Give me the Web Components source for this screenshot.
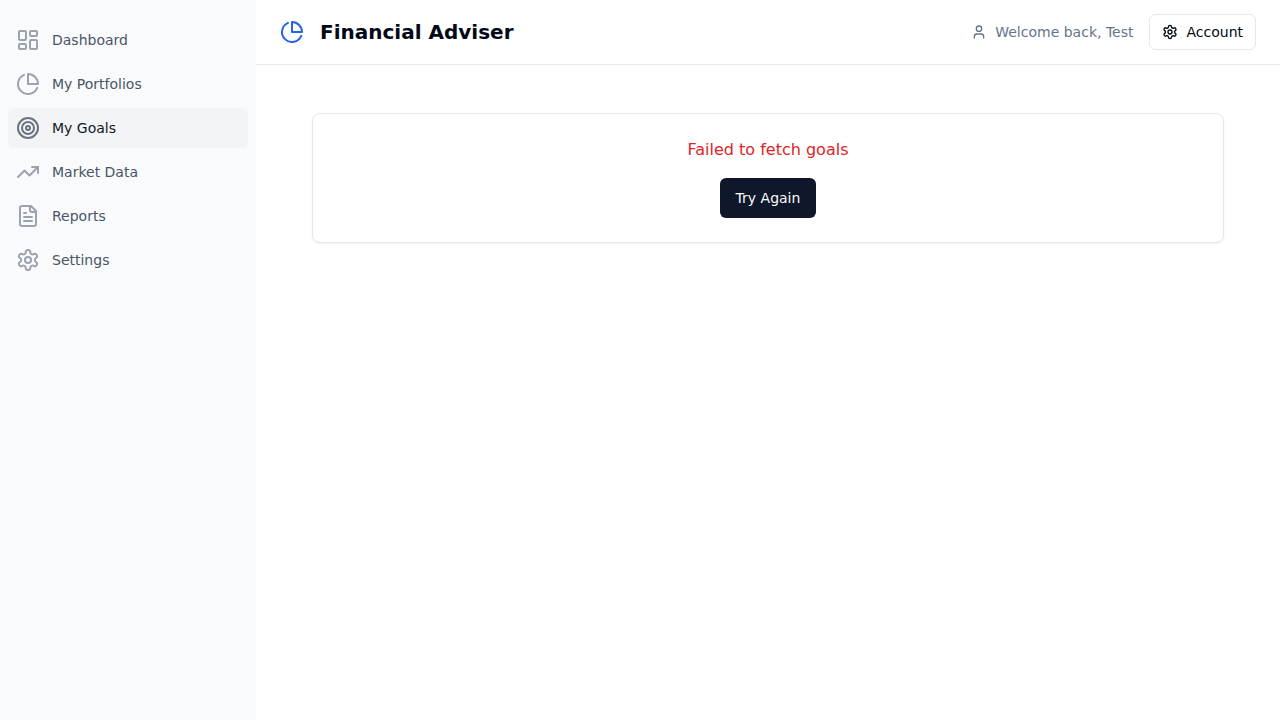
<!DOCTYPE html>
<html lang="en">
<head>
<meta charset="utf-8">
<meta name="viewport" content="width=device-width, initial-scale=1">
<title>Financial Adviser</title>
<style>
  body {
    margin: 0;
    font-family: "DejaVu Sans", sans-serif;
    font-size: 14px;
    line-height: 20px;
    color: #020817;
    background: #ffffff;
  }
</style>
</head>
<body>
<app-shell>
  <side-nav slot="sidebar">
    <nav-item icon="dashboard" href="#dashboard">Dashboard</nav-item>
    <nav-item icon="pie" href="#portfolios">My Portfolios</nav-item>
    <nav-item icon="target" href="#goals" active>My Goals</nav-item>
    <nav-item icon="trend" href="#market">Market Data</nav-item>
    <nav-item icon="file" href="#reports">Reports</nav-item>
    <nav-item icon="settings" href="#settings">Settings</nav-item>
  </side-nav>
  <app-header slot="header">
    Financial Adviser
    <user-greeting slot="actions">Welcome back, Test</user-greeting>
    <ui-button slot="actions" variant="outline" icon="settings">Account</ui-button>
  </app-header>
  <error-card>
    Failed to fetch goals
    <ui-button slot="action">Try Again</ui-button>
  </error-card>
</app-shell>

<script>
  const ICONS = {
    dashboard: '<rect width="7" height="9" x="3" y="3" rx="1"/><rect width="7" height="5" x="14" y="3" rx="1"/><rect width="7" height="9" x="14" y="12" rx="1"/><rect width="7" height="5" x="3" y="16" rx="1"/>',
    pie: '<path d="M21.21 15.89A10 10 0 1 1 8 2.83"/><path d="M22 12A10 10 0 0 0 12 2v10z"/>',
    target: '<circle cx="12" cy="12" r="10"/><circle cx="12" cy="12" r="6"/><circle cx="12" cy="12" r="2"/>',
    trend: '<polyline points="22 7 13.5 15.5 8.5 10.5 2 17"/><polyline points="16 7 22 7 22 13"/>',
    file: '<path d="M15 2H6a2 2 0 0 0-2 2v16a2 2 0 0 0 2 2h12a2 2 0 0 0 2-2V7Z"/><path d="M14 2v4a2 2 0 0 0 2 2h4"/><path d="M10 9H8"/><path d="M16 13H8"/><path d="M16 17H8"/>',
    settings: '<path d="M12.22 2h-.44a2 2 0 0 0-2 2v.18a2 2 0 0 1-1 1.73l-.43.25a2 2 0 0 1-2 0l-.15-.08a2 2 0 0 0-2.73.73l-.22.38a2 2 0 0 0 .73 2.73l.15.1a2 2 0 0 1 1 1.72v.51a2 2 0 0 1-1 1.74l-.15.09a2 2 0 0 0-.73 2.73l.22.38a2 2 0 0 0 2.73.73l.15-.08a2 2 0 0 1 2 0l.43.25a2 2 0 0 1 1 1.73V20a2 2 0 0 0 2 2h.44a2 2 0 0 0 2-2v-.18a2 2 0 0 1 1-1.73l.43-.25a2 2 0 0 1 2 0l.15.08a2 2 0 0 0 2.73-.73l.22-.39a2 2 0 0 0-.73-2.73l-.15-.08a2 2 0 0 1-1-1.74v-.5a2 2 0 0 1 1-1.74l.15-.09a2 2 0 0 0 .73-2.73l-.22-.38a2 2 0 0 0-2.73-.73l-.15.08a2 2 0 0 1-2 0l-.43-.25a2 2 0 0 1-1-1.73V4a2 2 0 0 0-2-2z"/><circle cx="12" cy="12" r="3"/>',
    user: '<path d="M19 21v-2a4 4 0 0 0-4-4H9a4 4 0 0 0-4 4v2"/><circle cx="12" cy="7" r="4"/>'
  };

  class BaseElement extends HTMLElement {
    connectedCallback() {
      if (this.shadowRoot) return;
      this.attachShadow({ mode: 'open' }).innerHTML = this.render();
    }
  }

  customElements.define('ui-icon', class extends BaseElement {
    render() {
      return `<style>
        :host { display: block; flex: none; width: 24px; height: 24px; }
        svg { display: block; width: 100%; height: 100%; }
      </style>
      <svg viewBox="0 0 24 24" fill="none" stroke="currentColor" stroke-width="2" stroke-linecap="round" stroke-linejoin="round" aria-hidden="true">${ICONS[this.getAttribute('name')]}</svg>`;
    }
  });

  customElements.define('ui-button', class extends BaseElement {
    render() {
      const icon = this.getAttribute('icon');
      return `<style>
        :host { display: inline-flex; }
        button {
          display: inline-flex; align-items: center; justify-content: center; gap: 8px;
          box-sizing: border-box; height: 40px; padding: 0 16px; margin: 0;
          border: 0; border-radius: 6px;
          background: #0f172a; color: #f8fafc;
          font: inherit; font-weight: 500; white-space: nowrap; cursor: pointer;
        }
        :host([variant="outline"]) button {
          height: 36px; padding: 0 12px;
          border: 1px solid #e2e8f0; background: #ffffff; color: #020817;
        }
        ui-icon { width: 16px; height: 16px; }
      </style>
      <button type="button">${icon ? `<ui-icon name="${icon}"></ui-icon>` : ''}<slot></slot></button>`;
    }
  });

  customElements.define('nav-item', class extends BaseElement {
    render() {
      const active = this.hasAttribute('active');
      return `<style>
        :host { display: block; }
        a {
          display: flex; align-items: center; gap: 12px; padding: 8px;
          border-radius: 6px; color: #4b5563; font-weight: 500; text-decoration: none;
        }
        ui-icon { color: #9ca3af; }
        :host([active]) a { background: #f3f4f6; color: #111827; }
        :host([active]) ui-icon { color: #6b7280; }
      </style>
      <a href="${this.getAttribute('href')}"${active ? ' aria-current="page"' : ''}><ui-icon name="${this.getAttribute('icon')}"></ui-icon><slot></slot></a>`;
    }
  });

  customElements.define('side-nav', class extends BaseElement {
    render() {
      return `<style>
        :host { display: block; padding: 20px 8px; background: #f8fafc; }
        nav { display: flex; flex-direction: column; gap: 4px; }
      </style>
      <nav aria-label="Main"><slot></slot></nav>`;
    }
  });

  customElements.define('user-greeting', class extends BaseElement {
    render() {
      return `<style>
        :host { display: flex; align-items: center; gap: 8px; color: #64748b; white-space: nowrap; }
        ui-icon { width: 16px; height: 16px; }
      </style>
      <ui-icon name="user"></ui-icon><span><slot></slot></span>`;
    }
  });

  customElements.define('app-header', class extends BaseElement {
    render() {
      return `<style>
        :host { display: block; border-bottom: 1px solid #e2e8f0; }
        header { display: flex; align-items: center; justify-content: space-between; min-height: 64px; padding: 0 24px; }
        .brand, .actions { display: flex; align-items: center; gap: 16px; }
        .brand ui-icon { color: #2563eb; }
        h1 { margin: 0; font-size: 20px; line-height: 28px; font-weight: 700; }
      </style>
      <header>
        <div class="brand"><ui-icon name="pie"></ui-icon><h1><slot></slot></h1></div>
        <div class="actions"><slot name="actions"></slot></div>
      </header>`;
    }
  });

  customElements.define('error-card', class extends BaseElement {
    render() {
      return `<style>
        :host {
          display: flex; flex-direction: column; align-items: center; gap: 16px; padding: 24px;
          border: 1px solid #e2e8f0; border-radius: 8px; background: #ffffff;
          box-shadow: 0 1px 2px rgba(0, 0, 0, 0.05);
        }
        p { margin: 0; font-size: 16px; line-height: 24px; color: #dc2626; }
      </style>
      <p role="alert"><slot></slot></p><slot name="action"></slot>`;
    }
  });

  customElements.define('app-shell', class extends BaseElement {
    render() {
      return `<style>
        :host { display: grid; grid-template-columns: 256px minmax(0, 1fr); min-height: 100vh; }
        .content { display: flex; flex-direction: column; }
        main { padding: 48px 56px; }
      </style>
      <slot name="sidebar"></slot>
      <div class="content"><slot name="header"></slot><main><slot></slot></main></div>`;
    }
  });
</script>
</body>
</html>
